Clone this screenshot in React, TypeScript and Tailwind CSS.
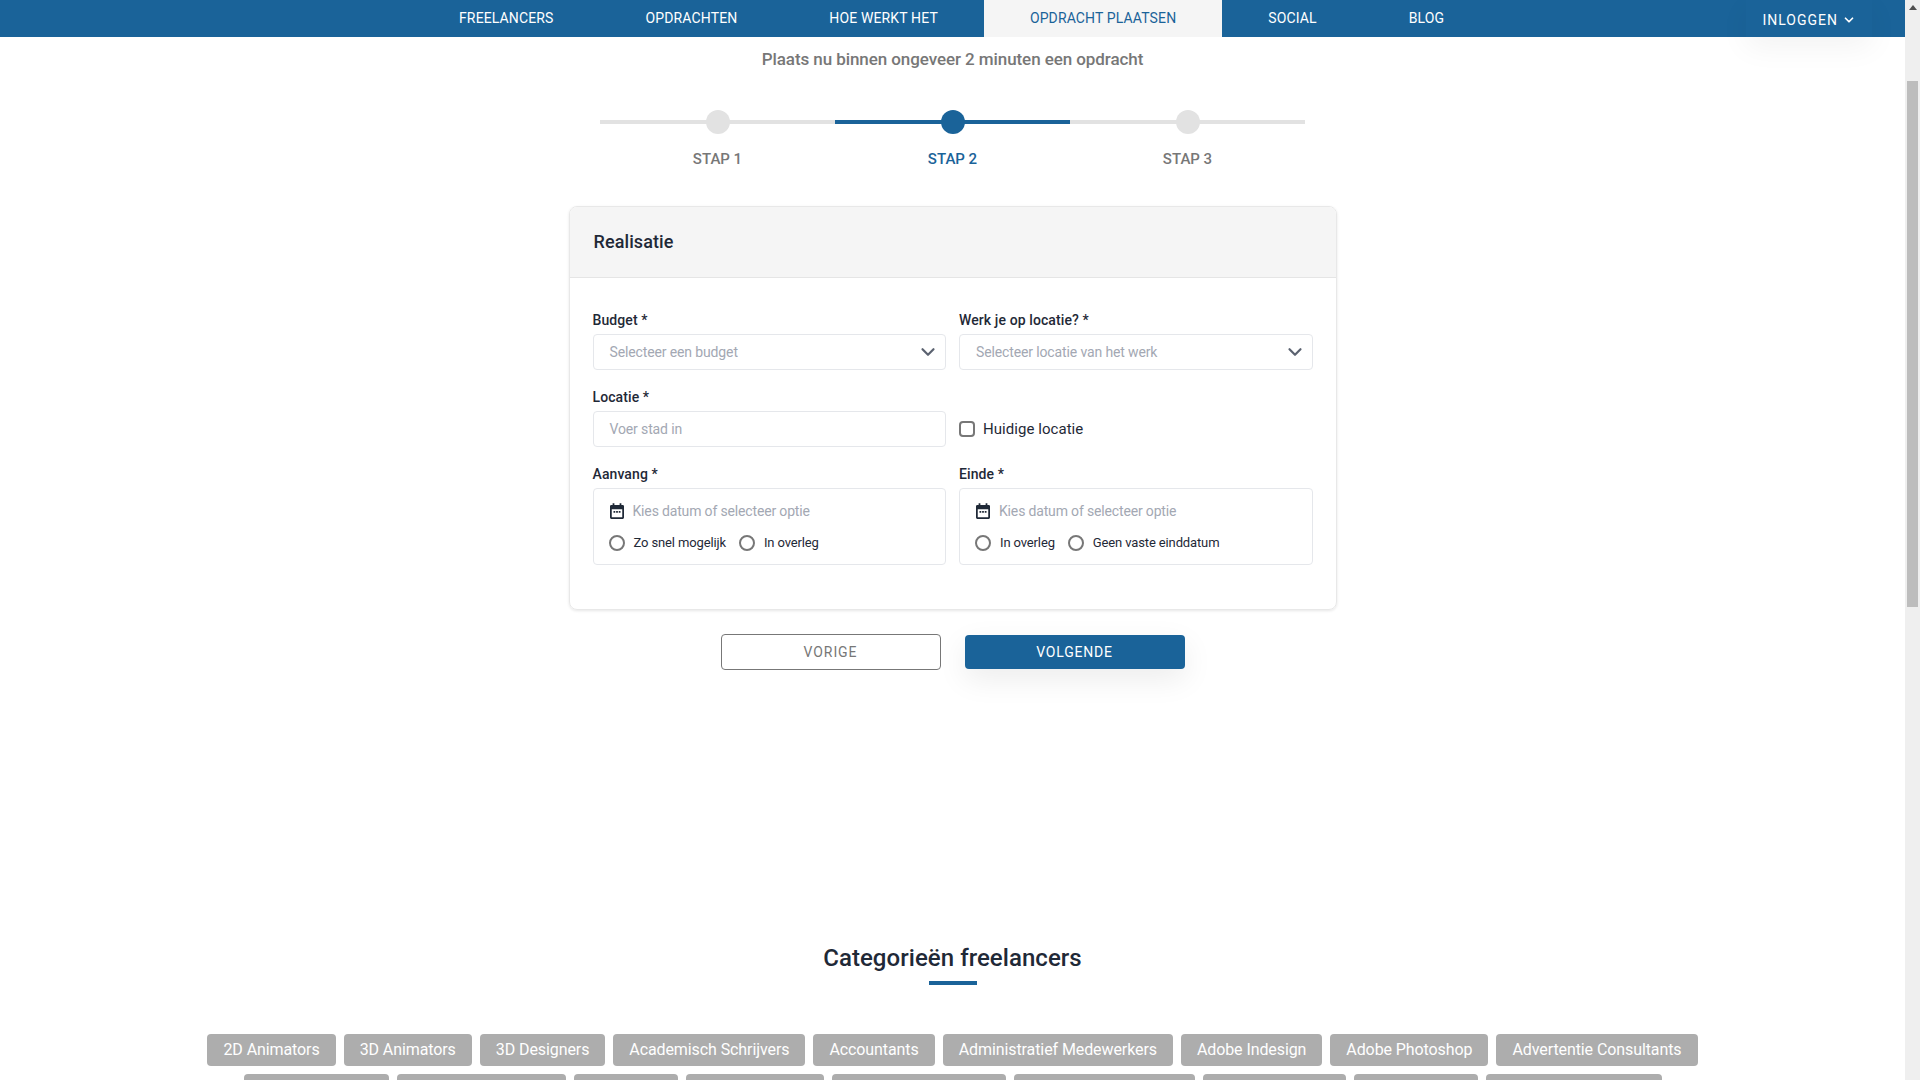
import { ChevronDown } from "lucide-react";

const navItems = ["FREELANCERS", "OPDRACHTEN", "HOE WERKT HET", "OPDRACHT PLAATSEN", "SOCIAL", "BLOG"];

const categories = [
  "2D Animators",
  "3D Animators",
  "3D Designers",
  "Academisch Schrijvers",
  "Accountants",
  "Administratief Medewerkers",
  "Adobe Indesign",
  "Adobe Photoshop",
  "Advertentie Consultants",
];

// tekst van de tweede rij valt buiten beeld
const hiddenChips = [
  "w-[145px]",
  "w-[169px]",
  "w-[104px]",
  "w-[138px]",
  "w-[174px]",
  "w-[181px]",
  "w-[143px]",
  "w-[124px]",
  "w-[176px]",
];

function Calendar() {
  return (
    <svg width="14" height="16" viewBox="0 0 16 18" className="shrink-0 text-[#1f2937]">
      <path
        fill="currentColor"
        d="M3 0h2v2h6V0h2v2h1.500A1.500 1.500 0 0 1 16 3.500v13a1.500 1.500 0 0 1-1.500 1.500h-13A1.500 1.500 0 0 1 0 16.500v-13A1.500 1.500 0 0 1 1.500 2H3V0Zm-1 7v9h12V7H2Zm2 2h2v2H4V9Zm3 0h2v2H7V9Zm3 0h2v2h-2V9Z"
      />
    </svg>
  );
}

function Radio({ label }: { label: string }) {
  return (
    <label className="flex items-center gap-[9px] text-[13px] leading-5 tracking-[-0.13px] text-[#1f2937]">
      <span className="-ml-px h-4 w-4 rounded-full border-2 border-[#777777] bg-white" />
      {label}
    </label>
  );
}

function Label({ children }: { children: string }) {
  return <div className="mb-1 h-5 text-sm leading-5 font-medium tracking-[0.1px] text-[#1f2937]">{children}</div>;
}

function SelectBox({ placeholder }: { placeholder: string }) {
  return (
    <div className="flex h-9 items-center justify-between rounded border border-[#e5e7eb] pr-[6px] pl-4 text-sm tracking-[-0.13px] text-[#a3a8b3]">
      {placeholder}
      <ChevronDown size={22} strokeWidth={2.4} className="text-[#5b6270]" />
    </div>
  );
}

function DateBox({ options }: { options: string[] }) {
  return (
    <div className="h-[77px] rounded border border-[#e5e7eb] px-4 pt-[13px]">
      <div className="flex h-[18px] items-center gap-[9px] text-sm tracking-[-0.16px] text-[#a3a8b3]">
        <Calendar />
        Kies datum of selecteer optie
      </div>
      <div className="mt-[13px] flex gap-[14px]">
        {options.map((o) => (
          <Radio key={o} label={o} />
        ))}
      </div>
    </div>
  );
}

export default function App() {
  return (
    <div className="flex h-screen overflow-hidden bg-white font-['Roboto',sans-serif]">
      <div className="min-w-0 flex-1">
        <nav className="flex h-[37px] bg-[#1a6399] pl-[413px] text-sm tracking-[0.13px] text-white">
          {navItems.map((item) => (
            <a
              key={item}
              className={
                item === "OPDRACHT PLAATSEN"
                  ? "flex items-center bg-[#f5f5f5] px-[46px] pb-px text-[#1a6399]"
                  : "flex items-center px-[46px] pb-px"
              }
            >
              {item}
            </a>
          ))}
          <button className="mr-[33px] ml-auto flex items-center gap-[4px] bg-[#1a6399] px-4 pt-[2px] text-sm tracking-[1px] shadow-[0_10px_30px_rgba(0,0,0,0.05)]">
            INLOGGEN
            <ChevronDown size={14} strokeWidth={3} />
          </button>
        </nav>

        <p className="mt-[10px] text-center text-[17px] leading-6 font-medium tracking-[-0.08px] text-[#777777]">
          Plaats nu binnen ongeveer 2 minuten een opdracht
        </p>

        <div className="mt-[39px] ml-[600px] grid w-[705px] grid-cols-3">
          {["STAP 1", "STAP 2", "STAP 3"].map((step) => {
            const active = step === "STAP 2";
            return (
              <div key={step} className="flex flex-col items-center">
                <div className="relative flex h-6 w-full items-center justify-center">
                  <div className={active ? "h-1 w-full bg-[#1a6399]" : "h-1 w-full bg-[#e2e2e2]"} />
                  <div
                    className={
                      active
                        ? "absolute h-6 w-6 rounded-full bg-[#1a6399]"
                        : "absolute h-6 w-6 rounded-full bg-[#e2e2e2]"
                    }
                  />
                </div>
                <div
                  className={
                    active
                      ? "mt-[15px] text-[15px] leading-5 font-medium text-[#1a6399]"
                      : "mt-[15px] text-[15px] leading-5 font-medium text-[#777777]"
                  }
                >
                  {step}
                </div>
              </div>
            );
          })}
        </div>

        <div className="mx-auto mt-[37px] w-[768px] overflow-hidden rounded-lg border border-[#e8e8e8] shadow-[0_1px_3px_rgba(0,0,0,0.1)]">
          <div className="flex h-[71px] items-center border-b border-[#e5e5e5] bg-[#f5f5f5] px-6 text-lg font-medium tracking-[0.1px] text-[#1f2937]">
            Realisatie
          </div>
          <div className="grid grid-cols-2 gap-x-[13px] gap-y-[17px] px-[23px] pt-[32px] pb-[44px]">
            <div>
              <Label>Budget *</Label>
              <SelectBox placeholder="Selecteer een budget" />
            </div>
            <div>
              <Label>Werk je op locatie? *</Label>
              <SelectBox placeholder="Selecteer locatie van het werk" />
            </div>
            <div>
              <Label>Locatie *</Label>
              <div className="flex h-9 items-center rounded border border-[#e5e7eb] px-4 text-sm tracking-[-0.13px] text-[#a3a8b3]">
                Voer stad in
              </div>
            </div>
            <div className="flex items-end">
              <label className="flex h-9 items-center gap-2 text-[15px] tracking-[0.05px] text-[#1f2937]">
                <span className="h-4 w-4 rounded-[4px] border-2 border-[#777777]" />
                Huidige locatie
              </label>
            </div>
            <div>
              <Label>Aanvang *</Label>
              <DateBox options={["Zo snel mogelijk", "In overleg"]} />
            </div>
            <div>
              <Label>Einde *</Label>
              <DateBox options={["In overleg", "Geen vaste einddatum"]} />
            </div>
          </div>
        </div>

        <div className="mt-6 flex items-center justify-center gap-6 text-sm">
          <button className="h-9 w-[220px] rounded border border-[#777777] tracking-[0.9px] text-[#777777]">
            VORIGE
          </button>
          <button className="h-[34px] w-[220px] rounded-sm bg-[#1a6399] tracking-[0.8px] text-white shadow-[0_10px_30px_rgba(0,0,0,0.08)]">
            VOLGENDE
          </button>
        </div>

        <h2 className="mt-[272px] text-center text-2xl font-medium tracking-[0.05px] text-[#1f2937]">
          Categorieën freelancers
        </h2>
        <div className="mx-auto mt-[7px] h-1 w-12 bg-[#1a6399]" />

        <div className="mx-auto mt-[49px] flex w-[1510px] flex-wrap justify-center gap-2">
          {categories.map((c) => (
            <a key={c} className="flex h-8 items-center rounded bg-[#adadad] px-4 tracking-[-0.09px] text-white">
              {c}
            </a>
          ))}
          {hiddenChips.map((w) => (
            <div key={w} className={`h-8 rounded bg-[#adadad] ${w}`} />
          ))}
        </div>
      </div>

      <div className="flex w-[15px] shrink-0 flex-col items-center bg-[#efefef]">
        <svg width="8" height="5" viewBox="0 0 8 5" className="mt-[5px] text-[#505050]">
          <path fill="currentColor" d="M4 0l4 5H0z" />
        </svg>
        <div className="mt-[71px] h-[526px] w-[11px] bg-[#bdbdbd]" />
      </div>
    </div>
  );
}
